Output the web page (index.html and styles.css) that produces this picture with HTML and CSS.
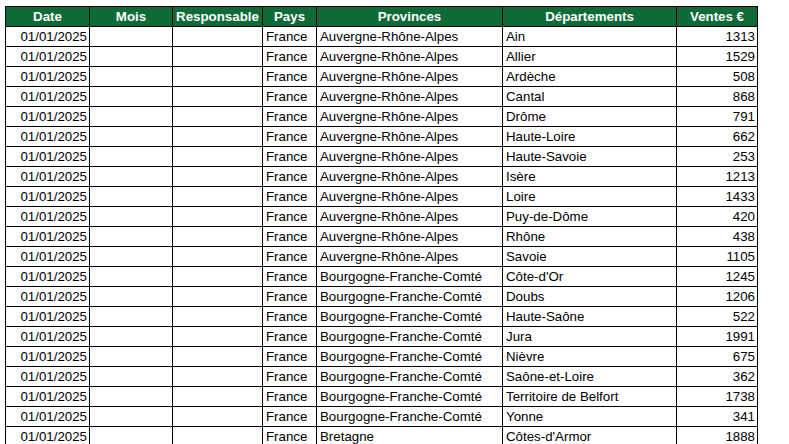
FILE: index.html
```html
<!DOCTYPE html>
<html lang="fr">
<head>
<meta charset="utf-8">
<link rel="stylesheet" href="styles.css">
</head>
<body>
<table class="sheet">
<colgroup>
<col class="c-date"><col class="c-mois"><col class="c-resp"><col class="c-pays"><col class="c-prov"><col class="c-dep"><col class="c-vente">
</colgroup>
<thead>
<tr><th>Date</th><th>Mois</th><th>Responsable</th><th>Pays</th><th>Provinces</th><th>Départements</th><th>Ventes €</th></tr>
</thead>
<tbody>
<tr><td class="num">01/01/2025</td><td></td><td></td><td>France</td><td>Auvergne-Rhône-Alpes</td><td>Ain</td><td class="num">1313</td></tr>
<tr><td class="num">01/01/2025</td><td></td><td></td><td>France</td><td>Auvergne-Rhône-Alpes</td><td>Allier</td><td class="num">1529</td></tr>
<tr><td class="num">01/01/2025</td><td></td><td></td><td>France</td><td>Auvergne-Rhône-Alpes</td><td>Ardèche</td><td class="num">508</td></tr>
<tr><td class="num">01/01/2025</td><td></td><td></td><td>France</td><td>Auvergne-Rhône-Alpes</td><td>Cantal</td><td class="num">868</td></tr>
<tr><td class="num">01/01/2025</td><td></td><td></td><td>France</td><td>Auvergne-Rhône-Alpes</td><td>Drôme</td><td class="num">791</td></tr>
<tr><td class="num">01/01/2025</td><td></td><td></td><td>France</td><td>Auvergne-Rhône-Alpes</td><td>Haute-Loire</td><td class="num">662</td></tr>
<tr><td class="num">01/01/2025</td><td></td><td></td><td>France</td><td>Auvergne-Rhône-Alpes</td><td>Haute-Savoie</td><td class="num">253</td></tr>
<tr><td class="num">01/01/2025</td><td></td><td></td><td>France</td><td>Auvergne-Rhône-Alpes</td><td>Isère</td><td class="num">1213</td></tr>
<tr><td class="num">01/01/2025</td><td></td><td></td><td>France</td><td>Auvergne-Rhône-Alpes</td><td>Loire</td><td class="num">1433</td></tr>
<tr><td class="num">01/01/2025</td><td></td><td></td><td>France</td><td>Auvergne-Rhône-Alpes</td><td>Puy-de-Dôme</td><td class="num">420</td></tr>
<tr><td class="num">01/01/2025</td><td></td><td></td><td>France</td><td>Auvergne-Rhône-Alpes</td><td>Rhône</td><td class="num">438</td></tr>
<tr><td class="num">01/01/2025</td><td></td><td></td><td>France</td><td>Auvergne-Rhône-Alpes</td><td>Savoie</td><td class="num">1105</td></tr>
<tr><td class="num">01/01/2025</td><td></td><td></td><td>France</td><td>Bourgogne-Franche-Comté</td><td>Côte-d'Or</td><td class="num">1245</td></tr>
<tr><td class="num">01/01/2025</td><td></td><td></td><td>France</td><td>Bourgogne-Franche-Comté</td><td>Doubs</td><td class="num">1206</td></tr>
<tr><td class="num">01/01/2025</td><td></td><td></td><td>France</td><td>Bourgogne-Franche-Comté</td><td>Haute-Saône</td><td class="num">522</td></tr>
<tr><td class="num">01/01/2025</td><td></td><td></td><td>France</td><td>Bourgogne-Franche-Comté</td><td>Jura</td><td class="num">1991</td></tr>
<tr><td class="num">01/01/2025</td><td></td><td></td><td>France</td><td>Bourgogne-Franche-Comté</td><td>Nièvre</td><td class="num">675</td></tr>
<tr><td class="num">01/01/2025</td><td></td><td></td><td>France</td><td>Bourgogne-Franche-Comté</td><td>Saône-et-Loire</td><td class="num">362</td></tr>
<tr><td class="num">01/01/2025</td><td></td><td></td><td>France</td><td>Bourgogne-Franche-Comté</td><td>Territoire de Belfort</td><td class="num">1738</td></tr>
<tr><td class="num">01/01/2025</td><td></td><td></td><td>France</td><td>Bourgogne-Franche-Comté</td><td>Yonne</td><td class="num">341</td></tr>
<tr><td class="num">01/01/2025</td><td></td><td></td><td>France</td><td>Bretagne</td><td>Côtes-d'Armor</td><td class="num">1888</td></tr>
</tbody>
</table>
</body>
</html>
```
FILE: styles.css
```css
html, body {
  margin: 0;
  padding: 0;
  background: #ffffff;
}
body {
  padding: 6px 0 0 5px;
  font-family: "Liberation Sans", Arial, sans-serif;
  font-size: 13.3px;
  color: #000000;
}
.sheet {
  border-collapse: collapse;
  table-layout: fixed;
  width: 752px;
}
.c-date { width: 84px; }
.c-mois { width: 83px; }
.c-resp { width: 90px; }
.c-pays { width: 54px; }
.c-prov { width: 186px; }
.c-dep { width: 174px; }
.c-vente { width: 81px; }
.sheet th,
.sheet td {
  border: 1px solid #000000;
  height: 18px;
  padding: 0 2px 0 3px;
  line-height: 18px;
  white-space: nowrap;
  overflow: hidden;
  vertical-align: bottom;
}
.sheet th {
  background: #0e6b37;
  color: #ffffff;
  font-weight: bold;
  text-align: center;
  padding: 1px 0 0 0;
}
.sheet td {
  padding-top: 1px;
}
.sheet td.num {
  text-align: right;
  padding: 1px 2px 0 2px;
}
```
